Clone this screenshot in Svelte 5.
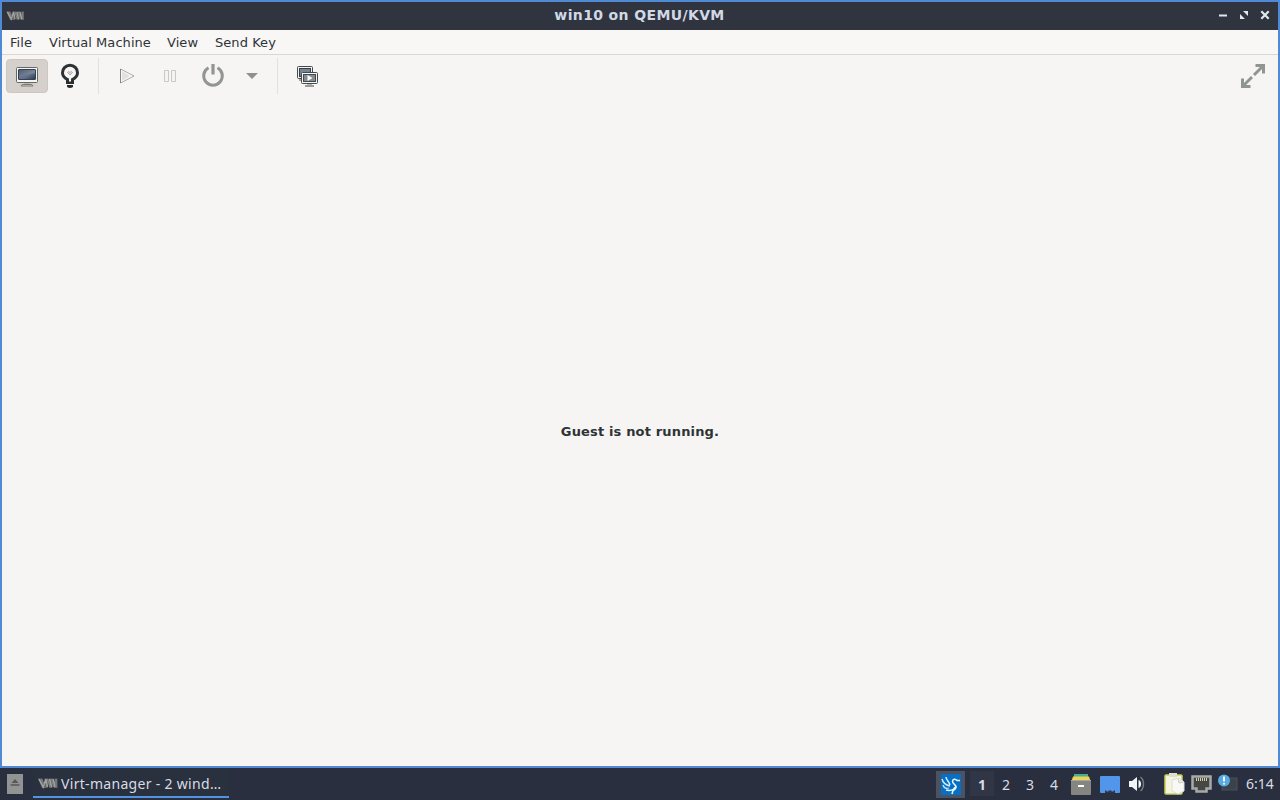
<script>
  const menus = [
    { label: 'File', width: 23 },
    { label: 'Virtual Machine', width: 102 },
    { label: 'View', width: 32 },
    { label: 'Send Key', width: 60 }
  ];
  const desktops = ['1', '2', '3', '4'];
</script>

{#snippet vmLogo(w, h)}
  <svg class="logo" width={w} height={h} viewBox="0 0 20 12" fill="none">
    <path d="M.5 1.500h4.500l2 5V1.500h4l1 3V1.500h3.500l1 4 .5-4H20V11h-3.500l-1.500-5v5h-3l-2-6v6H4.500Z" fill="#646565" />
    <path d="m1.500 2 4.200 8L8.500 2m0 1 1.500 7m2-8 2 8m1.500-8 2 8" stroke="#a2a3a2" stroke-width="1.500" />
    <path d="m3.500 2 3 6M10 2l2.500 8M14 2l2 8m2.500-8v8" stroke="#828382" stroke-width="1.100" />
  </svg>
{/snippet}

<div class="screen">
  <section class="window">
    <header class="title">
      <div class="side">{@render vmLogo(18, 11)}</div>
      <h1>win10 on QEMU/KVM</h1>
      <div class="controls">
        <svg width="12" height="14" viewBox="0 0 12 14"><path d="M2 7.500h8" stroke="#e0e8ed" stroke-width="2" /></svg>
        <svg width="12" height="14" viewBox="0 0 12 14"><path d="M5 3h5v5ZM2 6v5h5Z" fill="#e0e8ed" /></svg>
        <svg width="12" height="14" viewBox="0 0 12 14"><path d="m2.300 3.300 7.400 7.400m0-7.400-7.400 7.400" stroke="#e0e8ed" stroke-width="2.200" /></svg>
      </div>
    </header>

    <nav class="menu">
      {#each menus as menu}
        <span style="width: {menu.width}px">{menu.label}</span>
      {/each}
    </nav>

    <div class="toolbar">
      <button class="active" aria-label="Console">
        <svg width="24" height="24" viewBox="0 0 24 24">
          <defs>
            <linearGradient id="screenFill" x1="0" y1="0" x2="1" y2="1">
              <stop stop-color="#34435c" /><stop offset=".55" stop-color="#69758a" /><stop offset="1" stop-color="#263650" />
            </linearGradient>
          </defs>
          <rect x="1.500" y="3.500" width="21" height="15" rx="1" fill="#f5f5f2" stroke="#666762" />
          <rect x="3.500" y="5.500" width="17" height="10" rx=".5" fill="url(#screenFill)" stroke="#34405a" />
          <path d="M4 6h16v4C13 9 8 12 4 14Z" fill="#fff" opacity=".12" />
          <path d="M9 19h6v2H9Z" fill="#b5b6b4" />
          <path d="M7 20.500h10l1 1.500H6Z" fill="#d5d5d1" stroke="#676866" stroke-width=".8" />
        </svg>
      </button>
      <button class="bulb" aria-label="Details">
        <svg width="24" height="26" viewBox="0 0 24 26">
          <path d="M9.500 20v-3.500C5.900 14.800 4.500 12.600 4.500 9.700a7.500 7.500 0 0 1 15 0c0 2.900-1.400 5.100-5 6.800V20" fill="none" stroke="#2c3234" stroke-width="3" />
          <path d="M8 18.500h8V21H8Z" fill="#292f31" />
          <path d="m9.500 9.500 1.200-1 1.300 1 1.300-1 1.200 1L12 12Z" fill="#dedfde" stroke="#959998" stroke-width=".8" />
          <path d="M9 22h6v1.300q0 1.700-3 1.700t-3-1.700Z" fill="#25292b" />
        </svg>
      </button>
      <i class="separator first"></i>
      <button class="play" aria-label="Run">
        <svg width="24" height="24" viewBox="0 0 24 24">
          <path d="M5.500 5v14L19 12Z" fill="#fafaf9" stroke="#aaaaa7" />
          <path d="M7 7v10l8-5Z" fill="#e1e1de" />
          <path d="M5.500 5v14" stroke="#858583" />
        </svg>
      </button>
      <button class="pause" aria-label="Pause">
        <svg width="24" height="24" viewBox="0 0 24 24"><path d="M6.500 6.500h4v11h-4Zm7 0h4v11h-4Z" fill="#f3f3f1" stroke="#c6c9c6" /></svg>
      </button>
      <button class="power" aria-label="Shut Down">
        <svg width="26" height="26" viewBox="0 0 26 26">
          <path d="M8.500 4.700a9.300 9.300 0 1 0 9 0" fill="none" stroke="#929593" stroke-width="3" />
          <path d="M13 1v10.500" stroke="#929593" stroke-width="3.200" />
        </svg>
      </button>
      <button class="drop" aria-label="Shutdown menu">
        <svg width="14" height="8" viewBox="0 0 14 8"><path d="M1 1h12L7 7Z" fill="#8e918f" /></svg>
      </button>
      <i class="separator second"></i>
      <button class="snapshots" aria-label="Snapshots">
        <svg width="24" height="24" viewBox="0 0 24 24">
          <rect x="2.500" y="2.500" width="15" height="12" rx="1" fill="#f2f2ef" stroke="#454a4e" />
          <rect x="4.500" y="4.500" width="11" height="8" fill="#778391" stroke="#35414d" />
          <path d="M4 15.500h3v1H4Z" fill="#555a5d" />
          <rect x="6.500" y="8.500" width="16" height="11" rx="1" fill="#f4f4f1" stroke="#454a4d" />
          <rect x="8.500" y="10.500" width="12" height="7" fill="#858b91" stroke="#414a52" />
          <path d="M12.500 11v6l5-3Z" fill="#fff" />
          <path d="M12 20h5v1h-5Z" fill="#b3b6b6" />
          <path d="M10 22h9" stroke="#666a6c" stroke-width="1.300" />
        </svg>
      </button>
      <button class="full" aria-label="Fullscreen">
        <svg width="26" height="26" viewBox="0 0 26 26">
          <path d="M15.500 2.500h8v8M23 3l-9 9M10.500 23.500h-8v-8M3 23l9-9" fill="none" stroke="#919592" stroke-width="3" />
        </svg>
      </button>
    </div>
    <main><strong>Guest is not running.</strong></main>
  </section>

  <footer>
    <div class="launcher">
      <svg width="16" height="20" viewBox="0 0 16 20"><rect width="16" height="20" fill="#929494" /><path d="m4.500 9 3.500-4 3.500 4Z" fill="#555959" /><path d="M3.500 11h9" stroke="#555959" stroke-width="1.500" /></svg>
    </div>
    <div class="task">{@render vmLogo(21, 12)}<span>Virt-manager - 2 wind…</span></div>
    <div class="bird">
      <svg width="20" height="21" viewBox="0 0 20 21">
        <rect width="20" height="21" fill="#0870c4" />
        <path d="M5 3c0 3 3 4 4 8M1 5c1 4 3 6 8 7" fill="none" stroke="#d6efff" stroke-width="1.400" />
        <path d="M2 11c1 3 3 4 6 3" fill="none" stroke="#bde5ff" stroke-width="1.300" />
        <path d="M19 6.500h-3c-1.500-2-4.500-1.500-4.500 1 0 2.500 4 3 3.500 6-.3 2-2 2.500-3 3L11 20M5 16c4 1 8 0 9-3" fill="none" stroke="#e9f7ff" stroke-width="1.500" />
      </svg>
    </div>
    <div class="desktops">
      {#each desktops as desktop, index}<span class:current={index === 0}>{desktop}</span>{/each}
    </div>
    <div class="quick">
      <svg class="files" width="20" height="21" viewBox="0 0 20 21">
        <path d="M3 0h14v3H3Z" fill="#4dac91" /><path d="M2 2.500h16l1.500 4.500H.5Z" fill="#ecd35c" />
        <rect y="6" width="20" height="15" rx="1" fill="#858681" /><path d="M0 6.500h20" stroke="#a5a69e" />
        <rect x="7" y="11" width="6" height="2" fill="#fff" />
      </svg>
      <svg class="desktop-icon" width="20" height="17" viewBox="0 0 20 17"><rect width="20" height="17" rx="1" fill="#5196e9" /><path d="M5 17v-2.500h1.500v1h2v-1h3v1h2v-1H15V17Z" fill="#28354a" /></svg>
      <svg class="sound" width="17" height="16" viewBox="0 0 17 16">
        <path d="M0 5h3l5-4v14l-5-4H0Z" fill="#f1f3f5" />
        <path d="M9.500 4c3.500 1 3.500 7 0 8Z" fill="#f1f3f5" /><path d="M11.500 1c4 3 4 11 0 14" fill="none" stroke="#777e87" stroke-width="1.400" />
      </svg>
    </div>
    <div class="tray">
      <svg width="21" height="22" viewBox="0 0 21 22">
        <rect x="1" y="2" width="17" height="19" rx="1" fill="#f4f4df" stroke="#c9d057" stroke-width="1.500" />
        <path d="M5 0h8v4H5Z" fill="#deded5" /><path d="m8 7 7-2 5 4v9l-6 3-6-3Z" fill="#f8f8f5" stroke="#deded8" /><path d="m14 6 1 4 5-1" fill="#e7e7e1" stroke="#cfcfc7" />
      </svg>
      <svg width="21" height="18" viewBox="0 0 21 18">
        <path d="M1.500 1.500h18v12h-4v3h-10v-3h-4Z" fill="#454744" stroke="#a9aaa7" stroke-width="2.500" />
        <path d="M5.500 3v3m2-3v3m2-3v3m2-3v3m2-3v3m2-3v3" stroke="#d6d1aa" stroke-width="1" />
      </svg>
      <svg class="notice" width="20" height="18" viewBox="0 0 20 18">
        <rect x="4" y="4" width="15" height="12" fill="#3a424b" stroke="#4b515a" />
        <circle cx="6" cy="6.500" r="6" fill="#58ace0" /><path d="M6 2.500v5m0 1.500v1.500" stroke="#fff" stroke-width="1.800" />
      </svg>
    </div>
    <time>6:14</time>
  </footer>
</div>

<style>
  :global(body) { margin: 0; overflow: hidden; }
  * { box-sizing: border-box; }
  svg { display: block; flex-shrink: 0; }
  .screen { width: 1280px; height: 800px; display: grid; grid-template-rows: 768px 32px; background: #272f3e; }
  .window { border: 2px solid #5089d4; background: #f6f5f4; display: grid; grid-template-rows: 28px 25px 43px 1fr; font-family: "DejaVu Sans", sans-serif; color: #2e3436; }
  .title { background: #2f343f; color: #d1d9e6; display: grid; grid-template-columns: 100px 1fr 100px; align-items: center; }
  h1 { margin: 0; font: bold 14px/26px "DejaVu Sans", sans-serif; letter-spacing: .37px; text-align: center; padding: 0 1px 2px 0; }
  .side { padding: 0 0 1px 4px; }
  .controls { display: flex; justify-content: flex-end; gap: 9px; padding: 0 7px 2px 0; }
  .menu { display: flex; gap: 16px; padding: 1px 0 0 8px; border-bottom: 1px solid #d9d6d3; font-size: 13px; line-height: 24px; letter-spacing: .06px; background: #f8f7f6; }
  .menu span { white-space: nowrap; }
  .toolbar { display: flex; align-items: center; padding: 0 9px 2px 4px; }
  button { display: grid; place-items: center; padding: 0; border: 0; background: none; height: 34px; }
  .active { width: 42px; border: 1px solid #cdc7c2; border-radius: 4px; background: #d5d0cc; }
  .bulb { width: 44px; }
  .separator { width: 1px; height: 36px; background: #e3e1de; }
  .first { margin: 0 10px 0 6px; }
  .play { width: 36px; }
  .pause { width: 50px; }
  .power { width: 36px; }
  .drop { width: 42px; }
  .second { margin-left: 4px; }
  .snapshots { width: 57px; }
  .full { margin-left: auto; width: 32px; }
  main { display: grid; place-items: center; padding-bottom: 2px; font-size: 13px; letter-spacing: .16px; }
  footer { background: #292f3e; display: flex; align-items: stretch; color: #d8dde5; font: 14px/32px "Noto Sans", sans-serif; }
  .launcher { width: 33px; padding: 6px 0 0 7px; }
  .task { width: 196px; height: 30px; display: flex; align-items: center; gap: 3px; padding: 2px 0 0 4px; border-bottom: 2px solid #5294e2; white-space: nowrap; background: #29303e; }
  .task span { letter-spacing: .31px; line-height: 28px; padding-top: 1px; }
  .bird { margin-left: 707px; width: 29px; height: 27px; margin-top: 3px; display: grid; place-items: center; background: #4b5362; }
  .desktops { display: flex; margin-left: 5px; }
  .desktops span { width: 24px; text-align: center; line-height: 33px; }
  .desktops .current { font-weight: bold; background: #303646; margin: 3px 0 4px; line-height: 27px; }
  .quick { display: flex; align-items: center; gap: 9px; margin-left: 5px; }
  .tray { display: flex; align-items: center; gap: 6px; margin-left: 18px; }
  .notice { margin-bottom: 3px; }
  time { margin-left: 8px; white-space: nowrap; }
</style>
